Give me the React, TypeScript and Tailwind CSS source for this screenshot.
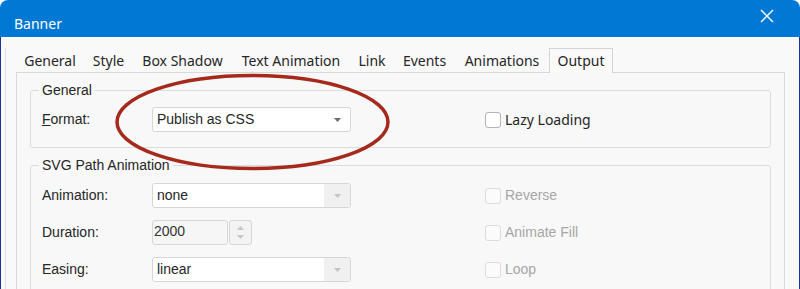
import React from 'react';

const ui = "font-['Segoe_UI','Noto_Sans',sans-serif]";
const arial = "font-['Liberation_Sans',Arial,sans-serif]";

const tabs = [
  { label: 'General', w: 'w-[68px]' },
  { label: 'Style', w: 'w-[49px]' },
  { label: 'Box Shadow', w: 'w-[99px]' },
  { label: 'Text Animation', w: 'w-[118px]' },
  { label: 'Link', w: 'w-[44px]' },
  { label: 'Events', w: 'w-[61px]' },
  { label: 'Animations', w: 'w-[94px]' },
  { label: 'Output', w: 'w-[64px]' },
];

const Caret: React.FC<{ color: string }> = ({ color }) => (
  <svg width="7" height="4" viewBox="0 0 7 4">
    <path d="M0 0 L7 0 L3.5 4 Z" fill={color} />
  </svg>
);

const Select: React.FC<{ value: string; disabled?: boolean }> = ({ value, disabled }) => (
  <div className="flex h-[25px] w-[199px] items-center rounded-[3px] border border-[#d6d6d6] bg-white">
    <span className={`flex-1 pl-[4px] text-[14px] text-[#262626] ${arial}`}>{value}</span>
    {disabled ? (
      <div className="flex h-full w-[26px] items-center justify-center rounded-r-[3px] bg-[#f0f0f0]">
        <Caret color="#c4c4c4" />
      </div>
    ) : (
      <div className="flex h-full w-[26px] items-center justify-center">
        <Caret color="#6b6b6b" />
      </div>
    )}
  </div>
);

const Check: React.FC<{ label: string; disabled?: boolean }> = ({ label, disabled }) => (
  <div className="ml-[134px] flex items-center">
    <div
      className={`h-[16px] w-[16px] rounded-[3px] border ${
        disabled ? 'border-[#dcdcdc] bg-[#fbfbfb]' : 'border-[#b5b5b5] bg-white'
      }`}
    />
    {disabled ? (
      <span className={`ml-[4px] text-[14px] text-[#a6a6a6] ${arial}`}>{label}</span>
    ) : (
      <span className={`ml-[4px] text-[14px] text-[#262626] ${ui}`}>{label}</span>
    )}
  </div>
);

const Label: React.FC<{ children: React.ReactNode }> = ({ children }) => (
  <span className={`w-[110px] text-[14px] text-[#262626] ${arial}`}>{children}</span>
);

const Legend: React.FC<{ children: React.ReactNode }> = ({ children }) => (
  <span
    className={`-mt-[9px] -ml-[3px] block w-fit bg-[#f8f8f8] px-[3px] text-[14px] leading-[16px] text-[#262626] ${arial}`}
  >
    {children}
  </span>
);

export default function App() {
  return (
    <div className="relative h-[289px] w-[800px] overflow-hidden bg-white">
      <div className="flex h-full flex-col overflow-hidden rounded-t-[8px]">
        {/* title bar */}
        <div className="flex h-[37px] shrink-0 items-start justify-between bg-[#0078d4]">
          <span className={`pl-[14px] pt-[14px] text-[14px] leading-[20px] text-white ${ui}`}>Banner</span>
          <svg className="mr-[26px] mt-[9px]" width="14" height="14" viewBox="0 0 14 14">
            <path d="M1 1 L13 13 M13 1 L1 13" stroke="white" strokeWidth="1.4" />
          </svg>
        </div>

        <div className="flex-1 border-x border-[#1b3594] bg-[#f9f9f9] pl-[4px]">
          <div className="h-full border-l border-[#dedede] pl-[10px]">
            {/* tabs */}
            <div className="mt-[11px] flex">
              {tabs.map((t) => {
                const active = t.label === 'Output';
                return (
                  <div
                    key={t.label}
                    className={`relative z-10 -mb-px h-[25px] border border-b-0 text-center text-[14px] leading-[24px] text-[#262626] ${ui} ${t.w} ${
                      active ? 'border-[#d4d4d4] bg-[#fafafa]' : 'border-transparent'
                    }`}
                  >
                    {t.label}
                  </div>
                );
              })}
            </div>

            {/* panel */}
            <div className="h-[300px] w-[769px] border border-[#d9d9d9] bg-[#f8f8f8] px-[13px] pt-[17px]">
              <div className="rounded-[3px] border border-[#dcdcdc] pb-[15px] pl-[11px]">
                <Legend>General</Legend>
                <div className="mt-[9px] flex h-[25px] items-center">
                  <Label>
                    <span className="underline">F</span>ormat:
                  </Label>
                  <Select value="Publish as CSS" />
                  <Check label="Lazy Loading" />
                </div>
              </div>

              <div className="mt-[17px] rounded-[3px] border border-[#dcdcdc] pb-[15px] pl-[11px]">
                <Legend>SVG Path Animation</Legend>
                <div className="mt-[10px] flex flex-col gap-[12px]">
                  <div className="flex h-[25px] items-center">
                    <Label>Animation:</Label>
                    <Select value="none" disabled />
                    <Check label="Reverse" disabled />
                  </div>
                  <div className="flex h-[25px] items-center">
                    <Label>Duration:</Label>
                    <div className="flex w-[199px]">
                      <div
                        className={`h-[25px] w-[76px] rounded-[3px] border border-[#d6d6d6] bg-[#f6f6f6] pl-[1px] text-[14px] leading-[20px] text-[#333] ${arial}`}
                      >
                        2000
                      </div>
                      <div className="ml-[1px] flex h-[25px] w-[23px] flex-col items-center justify-center gap-[5px] rounded-[3px] border border-[#d6d6d6] bg-[#f3f3f3]">
                        <svg width="7" height="4" viewBox="0 0 7 4">
                          <path d="M0 4 L7 4 L3.5 0 Z" fill="#c6c6c6" />
                        </svg>
                        <svg width="7" height="4" viewBox="0 0 7 4">
                          <path d="M0 0 L7 0 L3.5 4 Z" fill="#c6c6c6" />
                        </svg>
                      </div>
                    </div>
                    <Check label="Animate Fill" disabled />
                  </div>
                  <div className="flex h-[25px] items-center">
                    <Label>Easing:</Label>
                    <Select value="linear" disabled />
                    <Check label="Loop" disabled />
                  </div>
                </div>
              </div>
            </div>
          </div>
        </div>
      </div>

      {/* hand-drawn annotation */}
      <svg className="pointer-events-none absolute left-0 top-0" width="800" height="289" viewBox="0 0 800 289">
        <ellipse cx="252.5" cy="122" rx="135.5" ry="46.5" fill="none" stroke="#a62a1c" strokeWidth="3.5" />
      </svg>
    </div>
  );
}
